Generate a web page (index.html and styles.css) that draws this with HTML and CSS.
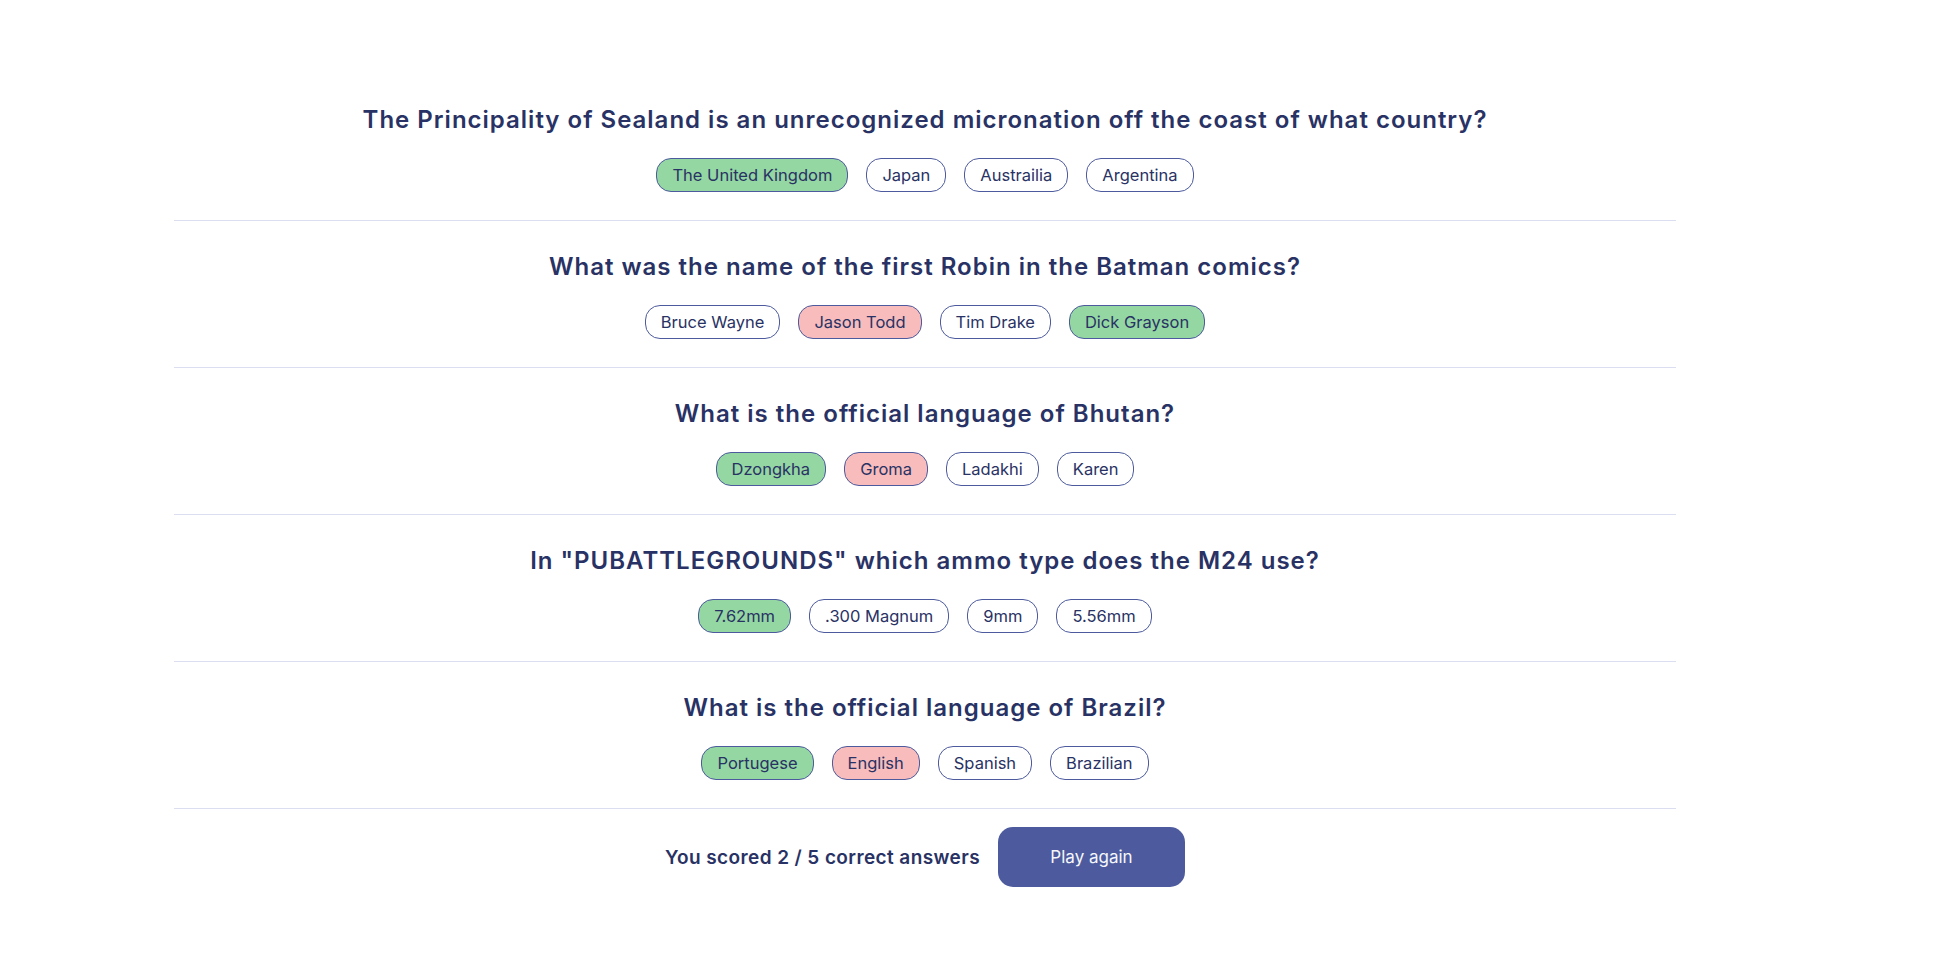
FILE: index.html
```html
<!DOCTYPE html>
<html lang="en">
<head>
<meta charset="utf-8">
<title>Quizzical</title>
<link rel="stylesheet" href="styles.css">
</head>
<body>
<main class="quiz">
  <section class="question">
    <h2 class="question-title">The Principality of Sealand is an unrecognized micronation off the coast of what country?</h2>
    <div class="answers">
      <span class="answer correct">The United Kingdom</span>
      <span class="answer">Japan</span>
      <span class="answer">Austrailia</span>
      <span class="answer">Argentina</span>
    </div>
  </section>
  <section class="question">
    <h2 class="question-title">What was the name of the first Robin in the Batman comics?</h2>
    <div class="answers">
      <span class="answer">Bruce Wayne</span>
      <span class="answer wrong">Jason Todd</span>
      <span class="answer">Tim Drake</span>
      <span class="answer correct">Dick Grayson</span>
    </div>
  </section>
  <section class="question">
    <h2 class="question-title">What is the official language of Bhutan?</h2>
    <div class="answers">
      <span class="answer correct">Dzongkha</span>
      <span class="answer wrong">Groma</span>
      <span class="answer">Ladakhi</span>
      <span class="answer">Karen</span>
    </div>
  </section>
  <section class="question">
    <h2 class="question-title">In &quot;PUBATTLEGROUNDS&quot; which ammo type does the M24 use?</h2>
    <div class="answers">
      <span class="answer correct">7.62mm</span>
      <span class="answer">.300 Magnum</span>
      <span class="answer">9mm</span>
      <span class="answer">5.56mm</span>
    </div>
  </section>
  <section class="question">
    <h2 class="question-title">What is the official language of Brazil?</h2>
    <div class="answers">
      <span class="answer correct">Portugese</span>
      <span class="answer wrong">English</span>
      <span class="answer">Spanish</span>
      <span class="answer">Brazilian</span>
    </div>
  </section>
  <footer class="result">
    <p class="score">You scored 2 / 5 correct answers</p>
    <button class="play-again" type="button">Play again</button>
  </footer>
</main>
</body>
</html>
```
FILE: styles.css
```css
* {
  box-sizing: border-box;
}

body {
  margin: 0;
  background: #ffffff;
  font-family: Inter, "Noto Sans", sans-serif;
  color: #293264;
}

.quiz {
  width: 1502px;
  margin-left: 174px;
  padding-top: 74px;
}

.question {
  display: flex;
  flex-direction: column;
  align-items: center;
  padding: 31px 0 28.6px;
  border-bottom: 1px solid #dbdef0;
}

.question-title {
  margin: 0;
  font-size: 24px;
  line-height: 30px;
  font-weight: 600;
  letter-spacing: 1px;
  text-align: center;
}

.answers {
  display: flex;
  justify-content: center;
  gap: 18px;
  margin-top: 22.5px;
}

.answer {
  display: flex;
  align-items: center;
  height: 34px;
  padding: 0 15px;
  border: 1px solid #4d5b9e;
  border-radius: 15px;
  font-size: 16.5px;
  color: #293264;
  background: #ffffff;
}

.answer.correct {
  background: #94d7a2;
}

.answer.wrong {
  background: #f8bcbc;
}

.result {
  display: flex;
  justify-content: center;
  align-items: center;
  gap: 18px;
  padding-top: 18px;
}

.score {
  margin: 0;
  font-size: 19px;
  font-weight: 600;
  letter-spacing: 0.4px;
}

.play-again {
  width: 187px;
  height: 60px;
  border: none;
  border-radius: 15px;
  background: #4d5b9e;
  color: #f5f7fb;
  font-family: Inter, "Noto Sans", sans-serif;
  font-size: 17px;
}
```
